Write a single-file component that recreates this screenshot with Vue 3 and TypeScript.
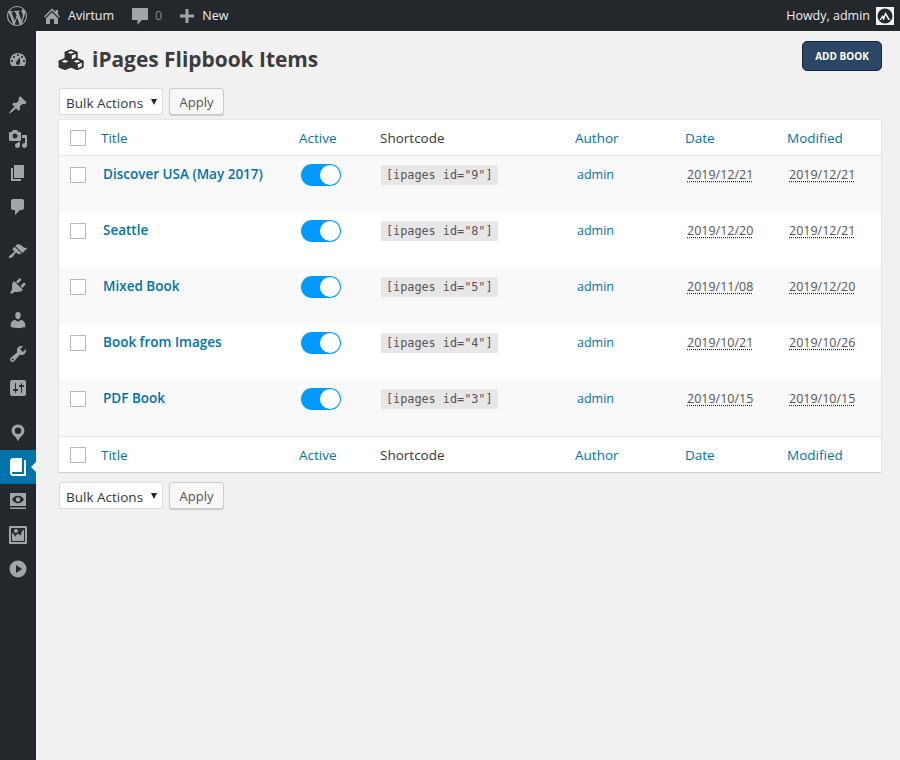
<script setup lang="ts">
interface Book {
  title: string;
  id: number;
  date: string;
  modified: string;
}

const menuTop = [
  'M3.76 16h12.48c1.1-1.37 1.76-3.11 1.76-5 0-4.42-3.58-8-8-8s-8 3.58-8 8c0 1.89.66 3.63 1.76 5zM10 4c.55 0 1 .45 1 1s-.45 1-1 1-1-.45-1-1 .45-1 1-1zM6 6c.55 0 1 .45 1 1s-.45 1-1 1-1-.45-1-1 .45-1 1-1zm8 0c.55 0 1 .45 1 1s-.45 1-1 1-1-.45-1-1 .45-1 1-1zm-5.37 5.55L12 7v6c0 1.1-.9 2-2 2s-2-.9-2-2c0-.57.24-1.08.63-1.45zM4 10c.55 0 1 .45 1 1s-.45 1-1 1-1-.45-1-1 .45-1 1-1zm12 0c.55 0 1 .45 1 1s-.45 1-1 1-1-.45-1-1 .45-1 1-1z',
];

const menuPosts = [
  'M10.44 3.02l1.82-1.82 6.36 6.35-1.83 1.82c-1.05-.68-2.48-.57-3.41.36l-.75.75c-.92.93-1.04 2.35-.35 3.41l-1.83 1.82-2.41-2.41-2.8 2.79c-.42.42-3.38 2.71-3.8 2.29s1.86-3.39 2.28-3.81l2.79-2.79L4.1 9.36l1.83-1.82c1.05.69 2.48.57 3.4-.36l.75-.75c.93-.92 1.05-2.35.36-3.41z',
  'M13 11V4c0-.55-.45-1-1-1h-1.67L9 1H5L3.67 3H2c-.55 0-1 .45-1 1v7c0 .55.45 1 1 1h10c.55 0 1-.45 1-1zM7 4.5c1.38 0 2.5 1.12 2.5 2.5S8.38 9.5 7 9.5 4.5 8.38 4.5 7 5.62 4.5 7 4.5zM14 6h5v10.5c0 1.38-1.12 2.5-2.5 2.5S14 17.88 14 16.5s1.12-2.5 2.5-2.5c.17 0 .34.02.5.05V9h-3V6zm-4 8.05V13h2v3.5c0 1.38-1.12 2.5-2.5 2.5S7 17.88 7 16.5 8.12 14 9.5 14c.17 0 .34.02.5.05z',
  'M6 15V2h10v13H6zm-1 1h8v2H3V5h2v11z',
  'M5 2h9c1.1 0 2 .9 2 2v7c0 1.1-.9 2-2 2h-2l-5 5v-5H5c-1.1 0-2-.9-2-2V4c0-1.1.9-2 2-2z',
];

const menuAdmin = [
  'M14.48 11.06L7.41 3.99l1.5-1.5c.5-.56 2.3-.47 3.51.32 1.21.8 1.43 1.28 2.91 2.1 1.18.64 2.45 1.26 4.45.85zm-.71.71L6.7 4.7 4.93 6.47c-.39.39-.39 1.02 0 1.41l1.06 1.06c.39.39.39 1.03 0 1.42-.6.6-1.43 1.11-2.21 1.69-.35.26-.7.53-1.01.84C1.43 13.23.4 14.85 1.25 15.7c.84.84 2.47-.18 3.81-1.53.31-.31.58-.66.85-1.01.57-.78 1.08-1.61 1.69-2.21.39-.39 1.02-.39 1.41 0l1.06 1.06c.39.39 1.02.39 1.41 0z',
  'M13.11 4.36L9.87 7.6 8 5.73l3.24-3.24c.35-.34 1.05-.2 1.56.32.52.51.66 1.21.31 1.55zm-8 1.77l.91-1.12 9.01 9.01-1.19.84c-.71.71-2.63 1.16-3.82 1.16H6.14L4.9 17.26c-.59.59-1.54.59-2.12 0-.59-.58-.59-1.53 0-2.12l1.24-1.24v-3.88c0-1.13.4-3.19 1.09-3.89zm7.26 3.97l3.24-3.24c.34-.35 1.04-.21 1.55.31.52.51.66 1.21.31 1.55l-3.24 3.25z',
  'M10 9.25c-2.27 0-2.73-3.44-2.73-3.44C7 4.02 7.82 2 9.97 2c2.16 0 2.98 2.02 2.71 3.81 0 0-.41 3.44-2.68 3.44zm0 2.57L12.72 10c2.39 0 4.52 2.33 4.52 4.53v2.49s-3.65 1.13-7.24 1.13c-3.65 0-7.24-1.13-7.24-1.13v-2.49c0-2.25 1.94-4.48 4.47-4.48z',
  'M16.68 9.77c-1.34 1.34-3.3 1.67-4.95.99l-5.41 6.52c-.99.99-2.59.99-3.58 0s-.99-2.59 0-3.57l6.52-5.42c-.68-1.65-.35-3.61.99-4.95 1.28-1.28 3.12-1.62 4.72-1.06l-2.89 2.89 2.82 2.82 2.86-2.87c.53 1.58.18 3.39-1.08 4.67zM3.81 16.21c.4.39 1.04.39 1.43 0 .4-.4.4-1.04 0-1.43-.39-.4-1.03-.4-1.43 0-.39.39-.39 1.03 0 1.43z',
  'M18 16V4c0-1.1-.9-2-2-2H4c-1.1 0-2 .9-2 2v12c0 1.1.9 2 2 2h12c1.1 0 2-.9 2-2zM8 11h1c.55 0 1 .45 1 1s-.45 1-1 1H8v1.5c0 .28-.22.5-.5.5s-.5-.22-.5-.5V13H6c-.55 0-1-.45-1-1s.45-1 1-1h1V5.5c0-.28.22-.5.5-.5s.5.22.5.5V11zm5-2h-1c-.55 0-1-.45-1-1s.45-1 1-1h1V5.5c0-.28.22-.5.5-.5s.5.22.5.5V7h1c.55 0 1 .45 1 1s-.45 1-1 1h-1v5.5c0 .28-.22.5-.5.5s-.5-.22-.5-.5V9z',
];

const menuPluginsBefore = [
  'M10 1.500C6.400 1.500 3.600 4.300 3.600 7.800c0 2.200 1.200 3.900 2.700 5.100.9.8 2.700 2.500 3.700 5.600 1-3.100 2.800-4.800 3.700-5.600 1.500-1.200 2.700-2.900 2.700-5.100 0-3.500-2.800-6.300-6.400-6.300zm0 3.100a3.200 3.200 0 1 1 0 6.400 3.200 3.200 0 0 1 0-6.400z',
];

const bookIcon = 'M16 3h2v16H5c-1.660 0-3-1.340-3-3V4c0-1.660 1.340-3 3-3h9v14H5c-.55 0-1 .45-1 1s.45 1 1 1h11V3z';

const menuPluginsAfter = [
  'M2 2h16v13H2V2zm8 2.800c-2.600 0-4.800 1.700-6 3.700 1.200 2 3.400 3.700 6 3.700s4.800-1.700 6-3.700c-1.200-2-3.400-3.700-6-3.700zm0 1.400a2.300 2.300 0 1 1 0 4.600 2.300 2.300 0 0 1 0-4.600zM2 16.500h16V18H2v-1.500z',
  'M2.250 1h15.500c.69 0 1.250.56 1.250 1.250v15.500c0 .69-.56 1.250-1.250 1.250H2.250C1.560 19 1 18.440 1 17.750V2.250C1 1.560 1.560 1 2.250 1zM17 17V3H3v14h14zM10 6c0-1.100-.9-2-2-2s-2 .9-2 2 .9 2 2 2 2-.9 2-2zm3 5s0-6 3-6v10c0 .55-.45 1-1 1H5c-.55 0-1-.45-1-1V8c2 0 3 4 3 4s1-3 3-3 3 2 3 2z',
  'M10 1.500a8.500 8.500 0 1 0 0 17 8.500 8.500 0 0 0 0-17zM8 6l6 4-6 4V6z',
];

const books: Book[] = [
  { title: 'Discover USA (May 2017)', id: 9, date: '2019/12/21', modified: '2019/12/21' },
  { title: 'Seattle', id: 8, date: '2019/12/20', modified: '2019/12/21' },
  { title: 'Mixed Book', id: 5, date: '2019/11/08', modified: '2019/12/20' },
  { title: 'Book from Images', id: 4, date: '2019/10/21', modified: '2019/10/26' },
  { title: 'PDF Book', id: 3, date: '2019/10/15', modified: '2019/10/15' },
];

const heads = [
  { key: 'title', label: 'Title', link: true },
  { key: 'active', label: 'Active', link: true },
  { key: 'shortcode', label: 'Shortcode', link: false },
  { key: 'author', label: 'Author', link: true },
  { key: 'date', label: 'Date', link: true },
  { key: 'modified', label: 'Modified', link: true },
];
</script>

<template>
  <div class="page">
    <header class="adminbar">
      <svg class="wp-logo" viewBox="0 0 20 20">
        <path fill-rule="evenodd" d="M20 10c0-5.510-4.490-10-10-10C4.480 0 0 4.490 0 10c0 5.520 4.480 10 10 10 5.510 0 10-4.480 10-10zM7.780 15.370L4.370 6.220c.55-.02 1.170-.08 1.170-.08.5-.06.44-1.130-.06-1.110 0 0-1.450.11-2.370.11-.18 0-.37 0-.58-.01C4.120 2.690 6.870 1.110 10 1.110c2.330 0 4.450.87 6.050 2.340-.68-.11-1.650.39-1.650 1.580 0 .74.45 1.360.9 2.100.35.61.55 1.360.55 2.460 0 1.490-1.400 5-1.400 5l-3.030-8.370c.54-.02.82-.17.82-.17.5-.05.44-1.250-.06-1.220 0 0-1.440.12-2.380.12-.87 0-2.330-.12-2.330-.12-.5-.03-.56 1.200-.06 1.220l.92.08 1.260 3.410zM17.410 10c.24-.64.74-1.870.43-4.250.7 1.290 1.050 2.710 1.050 4.250 0 3.290-1.730 6.240-4.400 7.780.97-2.590 1.940-5.200 2.920-7.780zM6.100 18.090C3.120 16.650 1.110 13.530 1.110 10c0-1.300.23-2.480.72-3.590C3.250 10.300 4.670 14.200 6.100 18.090zm4.030-6.630l2.580 6.980c-.86.29-1.760.45-2.710.45-.79 0-1.570-.11-2.290-.33.81-2.380 1.620-4.740 2.420-7.100z" />
      </svg>
      <svg class="bar-icon home" viewBox="0 0 20 20">
        <path d="M16 8.500l2 2-1 1.100L10 4.600l-7 7-1-1.100L10 2.500l3.500 3.500V4H16v4.500zM10 6.200l6 6V18h-4v-5H8v5H4v-5.800l6-6z" />
      </svg>
      <span class="bar-text site">Avirtum</span>
      <svg class="bar-icon comment" viewBox="0 0 20 20">
        <path d="M3 2h14c.6 0 1 .4 1 1v10c0 .6-.4 1-1 1h-5l-4.500 4.500V14H3c-.6 0-1-.4-1-1V3c0-.6.4-1 1-1z" />
      </svg>
      <span class="bar-count">0</span>
      <svg class="bar-icon plus" viewBox="0 0 20 20">
        <path d="M8.500 3h3v5.500H17v3h-5.500V17h-3v-5.500H3v-3h5.500V3z" />
      </svg>
      <span class="bar-text">New</span>
      <span class="bar-text howdy">Howdy, admin</span>
      <span class="avatar">
        <svg viewBox="0 0 18 18">
          <circle cx="9" cy="9" r="7.500" fill="#23282d" />
          <path d="M3.500 13 6.500 8l1 1.600L9.500 5l4.800 8h-2l-2.800-4.700L8.200 13H7.200L6.300 10.800 5 13H3.500z" fill="#f1f1f1" />
        </svg>
      </span>
    </header>

    <div class="body">
      <nav class="sidebar">
        <div class="menu-group first">
          <div v-for="d in menuTop" :key="d" class="menu-item">
            <svg viewBox="0 0 20 20"><path fill-rule="evenodd" :d="d" /></svg>
          </div>
        </div>
        <div class="menu-group">
          <div v-for="d in menuPosts" :key="d" class="menu-item">
            <svg viewBox="0 0 20 20"><path fill-rule="evenodd" :d="d" /></svg>
          </div>
        </div>
        <div class="menu-group">
          <div v-for="d in menuAdmin" :key="d" class="menu-item">
            <svg viewBox="0 0 20 20"><path fill-rule="evenodd" :d="d" /></svg>
          </div>
        </div>
        <div class="menu-group">
          <div v-for="d in menuPluginsBefore" :key="d" class="menu-item">
            <svg viewBox="0 0 20 20"><path fill-rule="evenodd" :d="d" /></svg>
          </div>
          <div class="menu-item current">
            <svg viewBox="0 0 20 20"><path :d="bookIcon" /></svg>
          </div>
          <div v-for="d in menuPluginsAfter" :key="d" class="menu-item">
            <svg viewBox="0 0 20 20"><path fill-rule="evenodd" :d="d" /></svg>
          </div>
        </div>
      </nav>

      <main class="content">
        <div class="title-row">
          <h1>
            <svg class="cubes" viewBox="0 0 28 24">
              <g stroke="#333" stroke-width="1.800" stroke-linejoin="round">
                <path d="M14 1.500l6 2.500v6L14 12.500 8 10V4z" fill="#333" />
                <path d="M14 6.500 20 4l-6-2.500L8 4z" fill="#fff" />
                <path d="M14 6.500V12.500L20 10V4z" fill="#fff" />
                <path d="M7.500 11l6 2.500v6L7.500 22l-6-2.500v-6z" fill="#333" />
                <path d="M7.500 16l6-2.500-6-2.500-6 2.500z" fill="#fff" />
                <path d="M20.500 11l6 2.500v6L20.500 22l-6-2.500v-6z" fill="#333" />
                <path d="M20.500 16l6-2.500-6-2.500-6 2.500z" fill="#fff" />
                <path d="M20.500 16v6l6-2.500v-6z" fill="#fff" />
              </g>
            </svg>
            iPages Flipbook Items
          </h1>
          <button class="add-book">ADD BOOK</button>
        </div>

        <div class="bulk">
          <div class="select">Bulk Actions<span class="caret"></span></div>
          <button class="apply">Apply</button>
        </div>

        <table class="books">
          <colgroup>
            <col class="c-check" />
            <col class="c-title" />
            <col class="c-active" />
            <col class="c-code" />
            <col class="c-author" />
            <col class="c-date" />
            <col class="c-mod" />
          </colgroup>
          <thead>
            <tr>
              <th class="check"><span class="box"></span></th>
              <th v-for="h in heads" :key="h.key" :class="{ link: h.link }">{{ h.label }}</th>
            </tr>
          </thead>
          <tbody>
            <tr v-for="book in books" :key="book.id">
              <td class="check"><span class="box"></span></td>
              <td><a class="book-title">{{ book.title }}</a></td>
              <td><span class="toggle"><span class="knob"></span></span></td>
              <td><code>[ipages id="{{ book.id }}"]</code></td>
              <td><a class="author">admin</a></td>
              <td><span class="when">{{ book.date }}</span></td>
              <td><span class="when">{{ book.modified }}</span></td>
            </tr>
          </tbody>
          <tfoot>
            <tr>
              <th class="check"><span class="box"></span></th>
              <th v-for="h in heads" :key="h.key" :class="{ link: h.link }">{{ h.label }}</th>
            </tr>
          </tfoot>
        </table>

        <div class="bulk bottom">
          <div class="select">Bulk Actions<span class="caret"></span></div>
          <button class="apply">Apply</button>
        </div>
      </main>
    </div>
  </div>
</template>

<style>
html,
body {
  margin: 0;
  background: #f1f1f1;
}
</style>

<style scoped>
.page {
  width: 900px;
  height: 760px;
  overflow: hidden;
  background: #f1f1f1;
  font-family: "Open Sans", "Noto Sans", sans-serif;
  font-size: 13px;
  color: #444;
}

.adminbar {
  display: flex;
  align-items: center;
  height: 31px;
  background: #23282d;
  color: #eee;
  font-size: 12.5px;
}

.wp-logo {
  width: 20px;
  height: 20px;
  margin-left: 7px;
  fill: #a0a5aa;
}

.bar-icon {
  width: 20px;
  height: 20px;
  fill: #a0a5aa;
}

.home {
  margin-left: 15px;
}

.site {
  margin-left: 6px;
}

.comment {
  margin-left: 16px;
}

.bar-count {
  margin-left: 5px;
  color: #82878c;
}

.plus {
  margin-left: 15px;
}

.bar-text {
  white-space: nowrap;
}

.plus + .bar-text {
  margin-left: 5px;
}

.howdy {
  margin-left: auto;
}

.avatar {
  display: flex;
  width: 18px;
  height: 18px;
  margin: 0 6px;
  background: #f1f1f1;
}

.avatar svg {
  width: 18px;
  height: 18px;
}

.body {
  display: flex;
  height: 729px;
}

.sidebar {
  flex: none;
  width: 36px;
  background: #23282d;
}

.menu-group {
  margin-bottom: 11px;
}

.menu-group.first {
  margin-top: 12px;
}

.menu-item {
  position: relative;
  display: flex;
  align-items: center;
  justify-content: center;
  height: 34px;
}

.menu-item svg {
  width: 20px;
  height: 20px;
  fill: #a0a5aa;
}

.menu-item.current {
  background: #0073aa;
}

.menu-item.current svg {
  fill: #fff;
}

.menu-item.current::after {
  content: "";
  position: absolute;
  right: 0;
  top: 50%;
  margin-top: -5px;
  border: 5px solid transparent;
  border-right-color: #f1f1f1;
}

.content {
  flex: 1;
  padding: 10px 18px 0 23px;
}

.title-row {
  display: flex;
  align-items: flex-start;
  justify-content: space-between;
  height: 37px;
}

h1 {
  display: flex;
  align-items: center;
  gap: 8px;
  height: 36px;
  margin: 0 0 0 -1px;
  font-size: 20.9px;
  font-weight: 700;
  line-height: 36px;
  color: #3c3c3c;
}

.cubes {
  width: 26px;
  height: 24px;
  margin-top: 1px;
}

.add-book {
  width: 80px;
  height: 30px;
  padding: 0;
  border: 1px solid #16263a;
  border-radius: 5px;
  background: #2c4766;
  color: #fff;
  font: 700 10px "Open Sans", sans-serif;
}

.bulk {
  display: flex;
  gap: 6px;
  margin-top: 10px;
}

.bulk.bottom {
  margin-top: 10px;
}

.select {
  position: relative;
  box-sizing: border-box;
  width: 104px;
  height: 27px;
  padding-left: 6px;
  border: 1px solid #ddd;
  background: #fff;
  color: #32373c;
  font-size: 13.5px;
  line-height: 28px;
}

.caret {
  position: absolute;
  right: 5px;
  top: 10px;
  border-style: solid;
  border-width: 6px 3.5px 0;
  border-color: #222 transparent transparent;
}

.apply {
  box-sizing: border-box;
  width: 55px;
  height: 27px;
  padding: 1px 0 0;
  border: 1px solid #ccc;
  border-radius: 3px;
  background: #f7f7f7;
  box-shadow: 0 1px 0 #ccc;
  color: #555;
  font: 13px "Open Sans", sans-serif;
}

.books {
  width: 822px;
  margin-top: 5px;
  table-layout: fixed;
  border-collapse: separate;
  border-spacing: 0;
  background: #fff;
  box-shadow: 0 1px 1px rgba(0, 0, 0, 0.1), 0 0 0 1px #e8e8e8;
}

.c-check {
  width: 32px;
}

.c-title {
  width: 198px;
}

.c-active {
  width: 81px;
}

.c-code {
  width: 195px;
}

.c-author {
  width: 110px;
}

.c-date {
  width: 102px;
}

.c-mod {
  width: 104px;
}

th {
  height: 36px;
  padding: 0 10px;
  box-sizing: border-box;
  text-align: left;
  font-size: 13.5px;
  font-weight: 400;
  color: #32373c;
}

th.link {
  color: #0073aa;
}

thead th {
  border-bottom: 1px solid #e1e1e1;
}

tfoot th {
  border-top: 1px solid #e1e1e1;
}

td {
  box-sizing: border-box;
  height: 56px;
  padding: 9px 12px 0;
  vertical-align: top;
  font-size: 12.5px;
  line-height: 19px;
}

tbody tr:nth-child(odd) {
  background: #f9f9f9;
}

th.check,
td.check {
  padding: 0;
}

.box {
  display: block;
  box-sizing: border-box;
  width: 16px;
  height: 16px;
  margin-left: 11px;
  border: 1px solid #b4b9be;
  background: #fff;
}

td.check .box {
  margin-top: 11px;
}

.book-title {
  color: #0073aa;
  font-weight: 600;
  font-size: 13.5px;
}

.author {
  color: #0073aa;
}

.toggle {
  display: block;
  position: relative;
  width: 40px;
  height: 22px;
  margin-top: -1px;
  border-radius: 11px;
  background: #0099ff;
}

.knob {
  position: absolute;
  top: 1px;
  right: 1px;
  width: 20px;
  height: 20px;
  border-radius: 50%;
  background: #fff;
}

code {
  display: inline-block;
  margin: -1px 0 0 -1px;
  padding: 0 5px;
  background: #e8e6e6;
  font-family: "DejaVu Sans Mono", monospace;
  font-size: 11.8px;
  line-height: 20px;
  color: #555;
}

.when {
  color: #555;
  text-decoration: underline dotted #333;
  text-underline-offset: 2px;
}
</style>
